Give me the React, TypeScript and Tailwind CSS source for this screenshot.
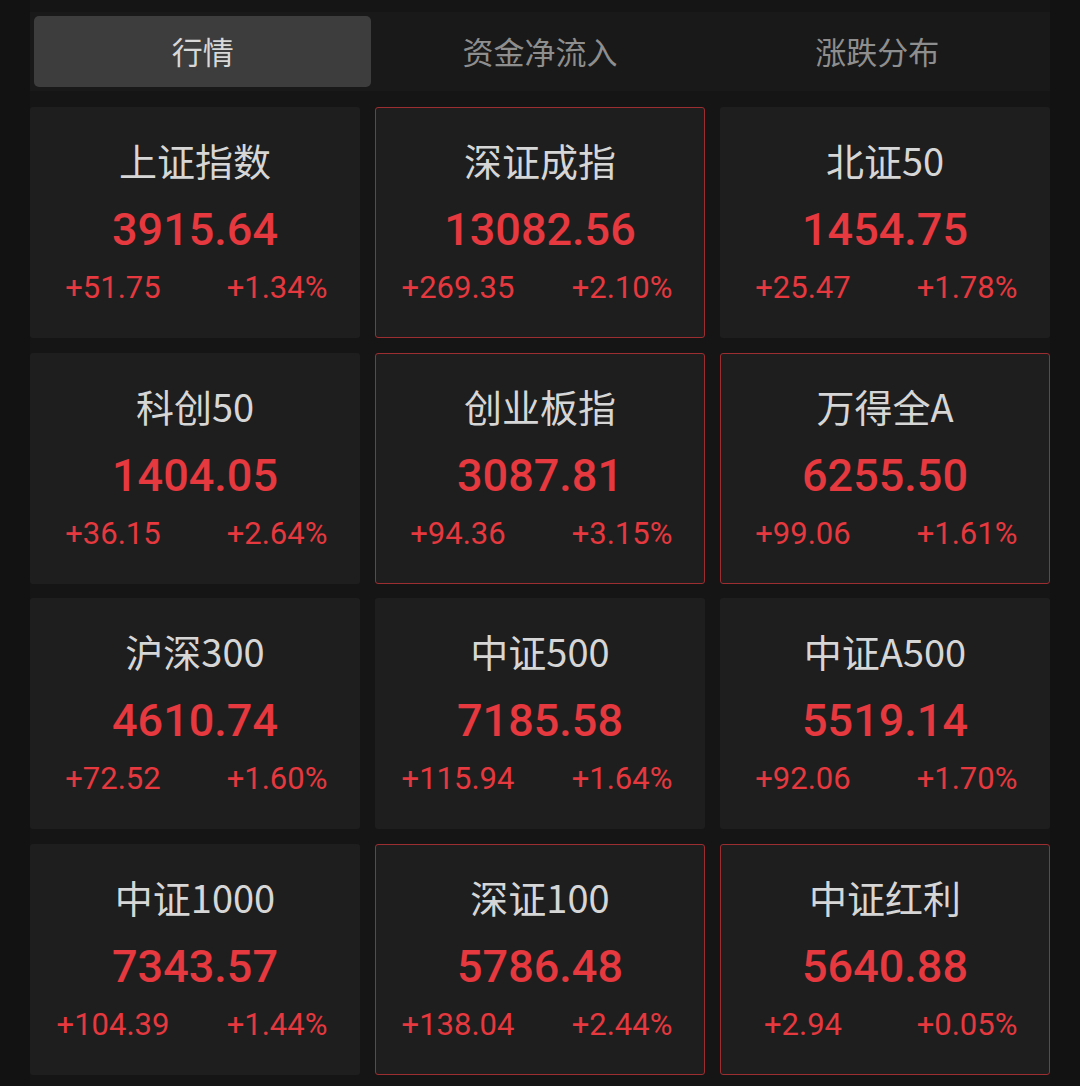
import React from "react";

type Item = { name: string; value: string; chg: string; pct: string; hl?: boolean };

const items: Item[] = [
  { name: "上证指数", value: "3915.64", chg: "+51.75", pct: "+1.34%" },
  { name: "深证成指", value: "13082.56", chg: "+269.35", pct: "+2.10%", hl: true },
  { name: "北证50", value: "1454.75", chg: "+25.47", pct: "+1.78%" },
  { name: "科创50", value: "1404.05", chg: "+36.15", pct: "+2.64%" },
  { name: "创业板指", value: "3087.81", chg: "+94.36", pct: "+3.15%", hl: true },
  { name: "万得全A", value: "6255.50", chg: "+99.06", pct: "+1.61%", hl: true },
  { name: "沪深300", value: "4610.74", chg: "+72.52", pct: "+1.60%" },
  { name: "中证500", value: "7185.58", chg: "+115.94", pct: "+1.64%" },
  { name: "中证A500", value: "5519.14", chg: "+92.06", pct: "+1.70%" },
  { name: "中证1000", value: "7343.57", chg: "+104.39", pct: "+1.44%" },
  { name: "深证100", value: "5786.48", chg: "+138.04", pct: "+2.44%", hl: true },
  { name: "中证红利", value: "5640.88", chg: "+2.94", pct: "+0.05%", hl: true },
];

const tabs = ["行情", "资金净流入", "涨跌分布"];

export default function App() {
  return (
    <div className="w-[1080px] h-[1086px] bg-[#121212] overflow-hidden" style={{ fontFamily: "'Noto Sans CJK SC', 'Noto Sans', sans-serif" }}>
      <div className="mx-[30px] h-full bg-[#151515] pt-[12px]">
        <div className="grid grid-cols-3 p-1 bg-[#191919] h-[79px]">
          {tabs.map((t, i) => (
            <div
              key={t}
              className={
                i === 0
                  ? "flex items-center justify-center rounded-[5px] bg-[#3d3d3d] text-[#d8d8d8] text-[31px]"
                  : "flex items-center justify-center text-[#8e8e8e] text-[31px]"
              }
            >
              {t}
            </div>
          ))}
        </div>
        <div className="grid grid-cols-3 gap-x-[15px] gap-y-[14.5px] mt-[16px]">
          {items.map((it) => (
            <div
              key={it.name}
              className={
                it.hl
                  ? "h-[231px] rounded-[3px] bg-[#1e1e1e] border border-[#9c2d31] flex flex-col items-center pt-[33px]"
                  : "h-[231px] rounded-[3px] bg-[#1e1e1e] border border-transparent flex flex-col items-center pt-[33px]"
              }
            >
              <div className="text-[38px] leading-[38px] text-[#d6d6d6]">{it.name}</div>
              <div
                className="mt-[27px] text-[45px] leading-[48px] font-medium text-[#e5383f]"
                style={{ fontFamily: "Roboto, 'Noto Sans', sans-serif" }}
              >
                {it.value}
              </div>
              <div
                className="mt-[18px] w-full grid grid-cols-2 text-[31px] leading-[32px] text-[#e5383f]"
                style={{ fontFamily: "Roboto, 'Noto Sans', sans-serif" }}
              >
                <div className="text-center">{it.chg}</div>
                <div className="text-center">{it.pct}</div>
              </div>
            </div>
          ))}
        </div>
      </div>
    </div>
  );
}
